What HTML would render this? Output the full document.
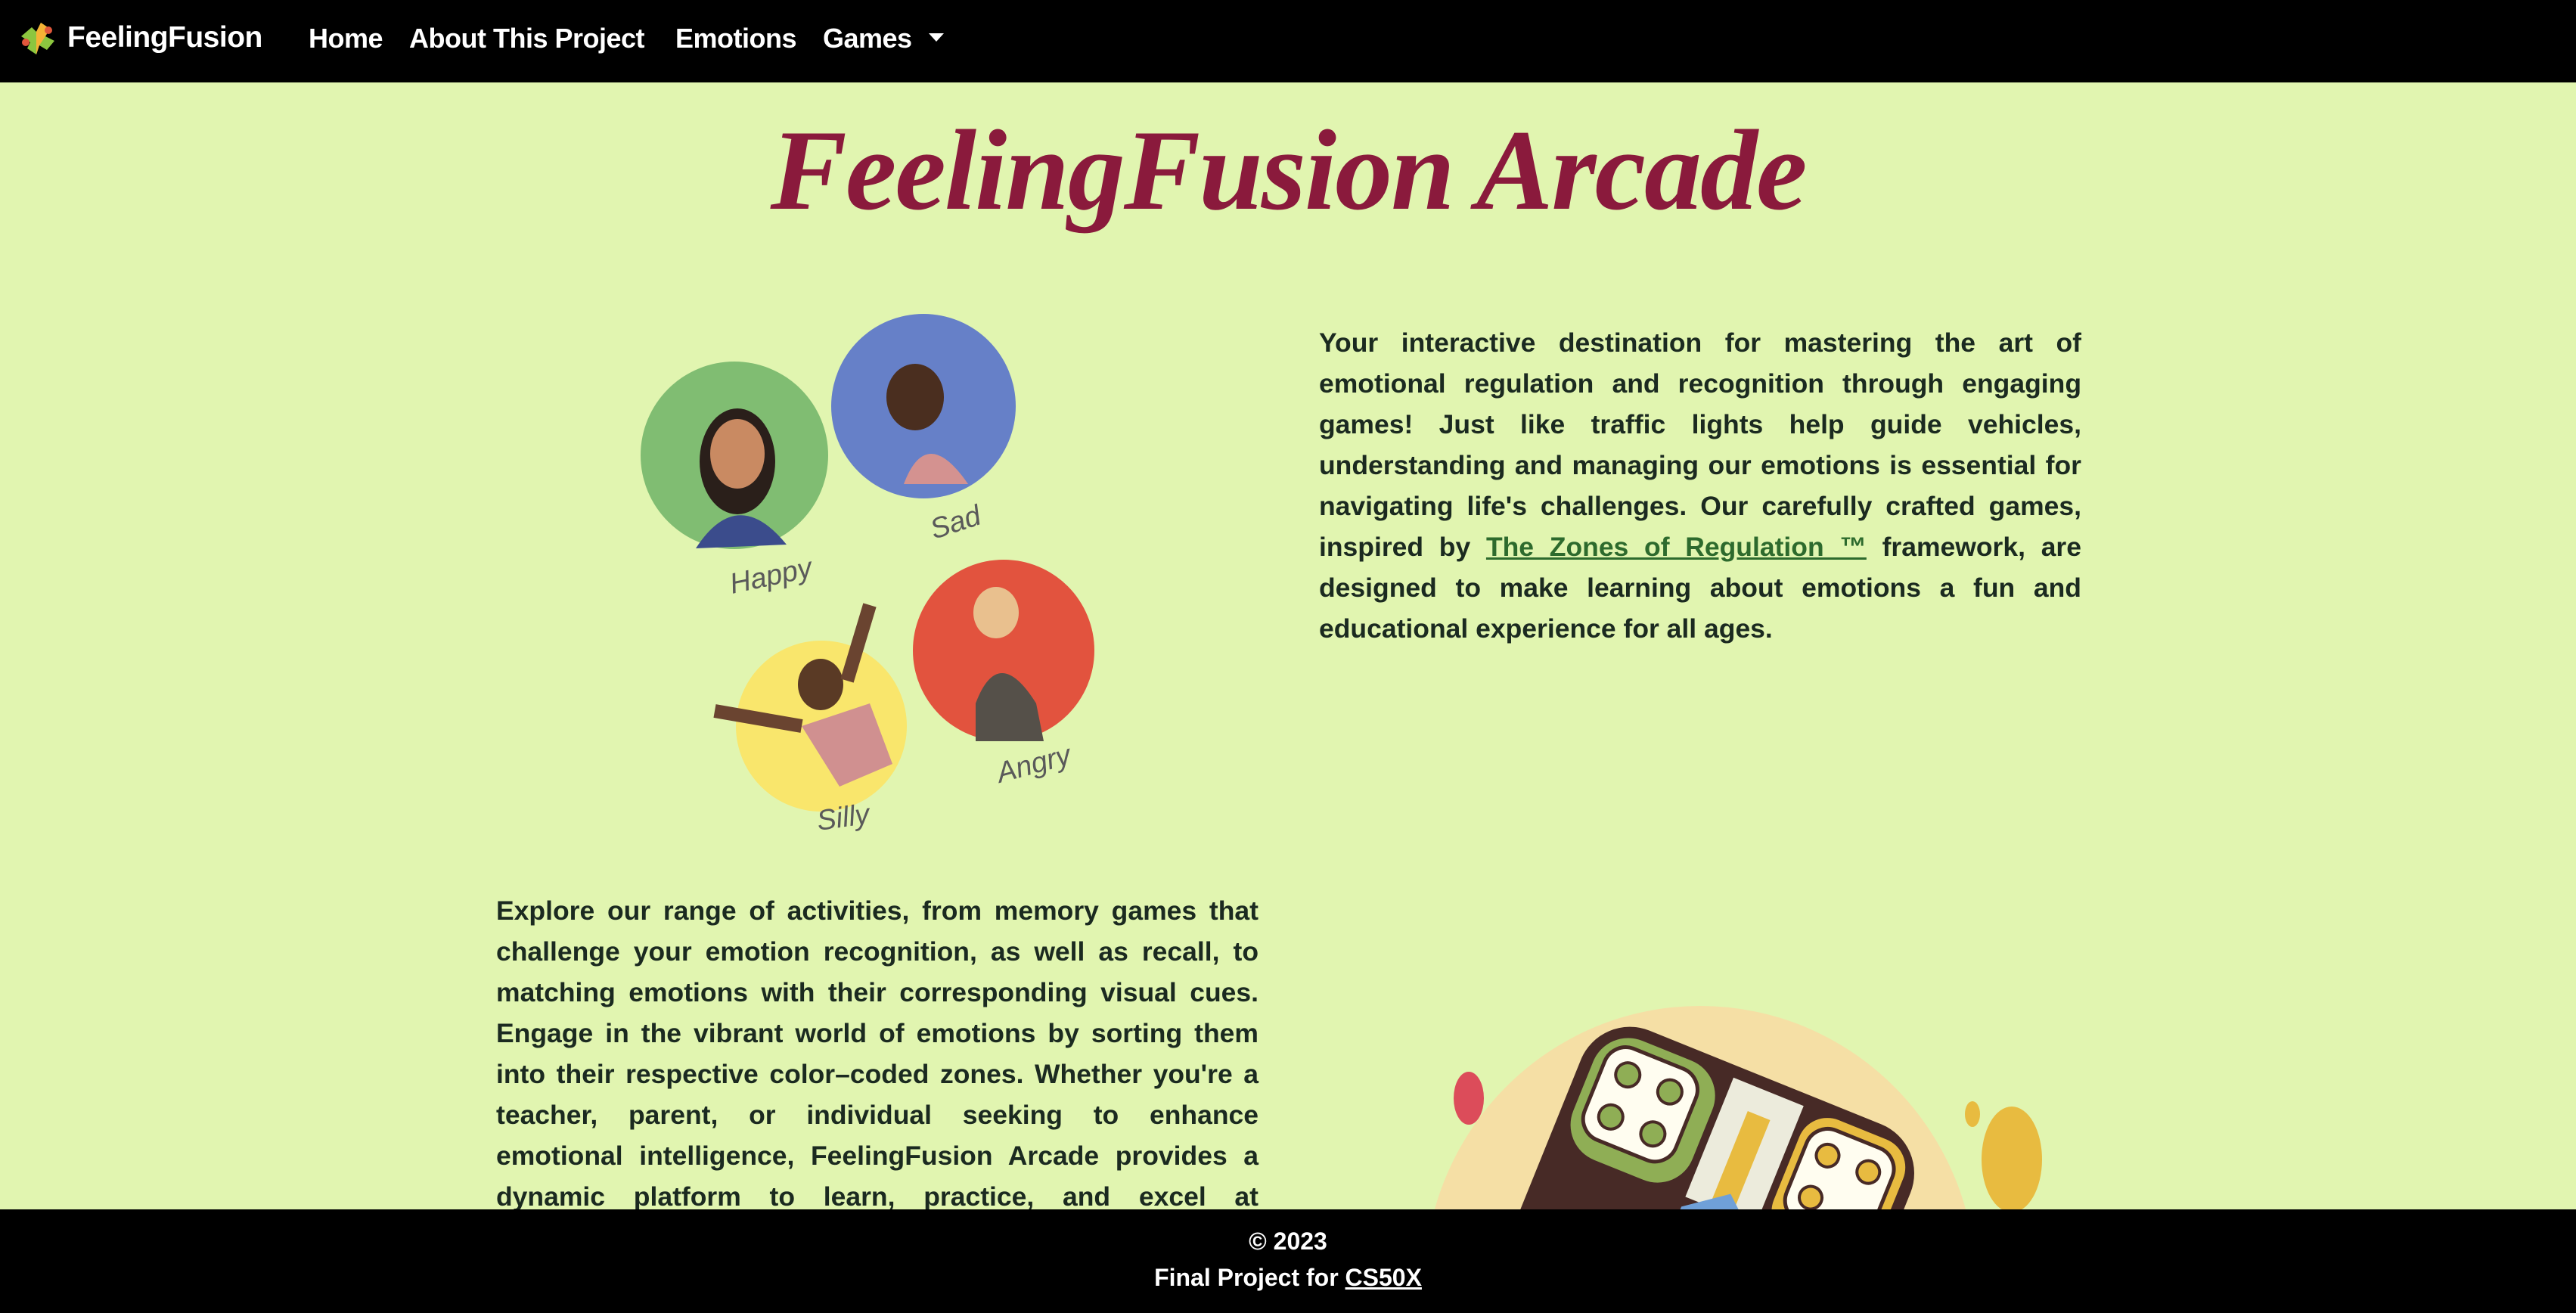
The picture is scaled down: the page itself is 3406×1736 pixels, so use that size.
<!DOCTYPE html>
<html><head><meta charset="utf-8"><style>
html,body{margin:0;padding:0;overflow:hidden}
body{width:3406px;height:1736px;background:#e1f5b0;position:relative;overflow:hidden;font-family:"Liberation Sans",Arial,sans-serif}
nav{position:absolute;left:0;top:0;width:3406px;height:109px;background:#000;color:#fff;font-weight:bold;font-size:36px;letter-spacing:-0.5px}
nav span{position:absolute;top:30px;white-space:nowrap}
h1{position:absolute;left:0;width:3406px;top:138px;margin:0;text-align:center;font-family:"Liberation Serif",serif;font-style:italic;font-weight:bold;font-size:152px;color:#8a1a3c;letter-spacing:-2px}
.p{position:absolute;font-weight:bold;font-size:35.5px;line-height:54px;color:#1b2a20;text-align:justify}
.p a{color:#2d6a2d;text-decoration:underline}
.l div{text-align:justify;text-align-last:justify;white-space:nowrap;height:54px}
footer{position:absolute;left:0;top:1599px;width:3406px;height:137px;background:#000;color:#fff;font-weight:bold;font-size:32px;text-align:center}
</style></head><body>
<nav>
<svg style="position:absolute;left:22px;top:26px" width="56" height="50" viewBox="0 0 56 50"><path d="M6 22 L20 10 L26 16 L32 4 L44 12 L38 22 L50 28 L40 40 L30 34 L26 46 L14 38 L18 30 Z" fill="#8cc63f"/><path d="M26 16 L32 4 L44 12 L38 22 L30 34 L26 46 Z" fill="#f5b335"/><circle cx="42" cy="14" r="5" fill="#e0573b"/><circle cx="12" cy="30" r="5" fill="#e0573b"/></svg>
<span style="left:89px;font-size:39px;top:28px">FeelingFusion</span>
<span style="left:408px">Home</span>
<span style="left:541px">About This Project</span>
<span style="left:893px">Emotions</span>
<span style="left:1088px">Games</span>
<svg style="position:absolute;left:1228px;top:44px" width="20" height="12"><path d="M0 0H20L10 11Z" fill="#fff"/></svg>
</nav>
<h1>FeelingFusion Arcade</h1>
<svg style="position:absolute;left:0;top:0" width="3406" height="1736">
<circle cx="971" cy="602" r="124" fill="#80bd72"/>
<circle cx="1221" cy="537" r="122" fill="#6680c8"/>
<circle cx="1086" cy="960" r="113" fill="#f9e66c"/>
<circle cx="1327" cy="860" r="120" fill="#e2533e"/>
<ellipse cx="975" cy="610" rx="50" ry="70" fill="#2a1f1a"/><ellipse cx="975" cy="600" rx="36" ry="46" fill="#c98a62"/><path d="M920 725 Q975 640 1040 720Z" fill="#3b4c8c"/>
<ellipse cx="1210" cy="525" rx="38" ry="44" fill="#4a2e1f"/><path d="M1195 640 Q1225 560 1280 640Z" fill="#d49290"/>
<ellipse cx="1085" cy="905" rx="30" ry="34" fill="#5a3a25"/><path d="M1060 960 L1150 930 L1180 1010 L1110 1040Z" fill="#d09090"/><path d="M945 940 L1060 960" stroke="#6a4430" stroke-width="18"/><path d="M1120 900 L1150 800" stroke="#6a4430" stroke-width="18"/>
<ellipse cx="1317" cy="810" rx="30" ry="34" fill="#e9c08e"/><path d="M1290 930 Q1320 850 1370 930 L1380 980 L1290 980Z" fill="#555049"/>
<g fill="#5a5a5a" font-size="38" font-family="Liberation Sans" font-style="italic">
<text x="968" y="785" transform="rotate(-12 968 785)">Happy</text>
<text x="1235" y="713" transform="rotate(-18 1235 713)">Sad</text>
<text x="1082" y="1098" transform="rotate(-8 1082 1098)">Silly</text>
<text x="1322" y="1035" transform="rotate(-15 1322 1035)">Angry</text>
</g>
<ellipse cx="2248" cy="1700" rx="365" ry="370" fill="#f5dfa5"/>
<ellipse cx="1942" cy="1452" rx="20" ry="35" fill="#dc4c5a"/>
<ellipse cx="2608" cy="1473" rx="10" ry="17" fill="#e8bb40"/>
<ellipse cx="2660" cy="1533" rx="40" ry="70" fill="#e8bb40"/>
<ellipse cx="2676" cy="1702" rx="20" ry="35" fill="#dc4c5a"/>
<g transform="translate(-40 -25) rotate(22 2300 1700)">
<rect x="2040" y="1440" width="470" height="470" rx="70" fill="#472a26"/>
<rect x="2056" y="1456" width="170" height="170" rx="50" fill="#8fae55"/>
<rect x="2070" y="1470" width="130" height="130" rx="30" fill="#fffdf0" stroke="#472a26" stroke-width="5"/>
<circle cx="2105" cy="1505" r="16" fill="#8fae55" stroke="#472a26" stroke-width="4"/><circle cx="2165" cy="1505" r="16" fill="#8fae55" stroke="#472a26" stroke-width="4"/><circle cx="2105" cy="1565" r="16" fill="#8fae55" stroke="#472a26" stroke-width="4"/><circle cx="2165" cy="1565" r="16" fill="#8fae55" stroke="#472a26" stroke-width="4"/>
<rect x="2236" y="1456" width="100" height="170" fill="#ecebdc"/>
<rect x="2270" y="1490" width="32" height="136" fill="#e8bb40"/>
<rect x="2346" y="1456" width="148" height="170" rx="40" fill="#e8bb40"/>
<rect x="2358" y="1470" width="122" height="130" rx="30" fill="#fffdf0" stroke="#472a26" stroke-width="5"/>
<circle cx="2390" cy="1505" r="15" fill="#e8bb40" stroke="#472a26" stroke-width="4"/><circle cx="2448" cy="1505" r="15" fill="#e8bb40" stroke="#472a26" stroke-width="4"/><circle cx="2390" cy="1565" r="15" fill="#e8bb40" stroke="#472a26" stroke-width="4"/>
<path d="M2236 1640 L2290 1600 L2336 1640 L2336 1720 L2236 1720Z" fill="#6fa0d8"/>
</g>
</svg>
<div class="p" style="left:1744px;top:426px;width:1008px">Your interactive destination for mastering the art of emotional regulation and recognition through engaging games! Just like traffic lights help guide vehicles, understanding and managing our emotions is essential for navigating life's challenges. Our carefully crafted games, inspired by <a>The Zones of Regulation ™</a> framework, are designed to make learning about emotions a fun and educational experience for all ages.</div>
<div class="p l" style="left:656px;top:1177px;width:1008px">
<div>Explore our range of activities, from memory games that</div>
<div>challenge your emotion recognition, as well as recall, to</div>
<div>matching emotions with their corresponding visual cues.</div>
<div>Engage in the vibrant world of emotions by sorting them</div>
<div>into their respective color–coded zones. Whether you're a</div>
<div>teacher, parent, or individual seeking to enhance</div>
<div>emotional intelligence, FeelingFusion Arcade provides a</div>
<div>dynamic platform to learn, practice, and excel at</div>
</div>
<footer><div style="position:absolute;top:24px;width:100%">© 2023</div><div style="position:absolute;top:72px;width:100%">Final Project for <u>CS50X</u></div></footer>
</body></html>
